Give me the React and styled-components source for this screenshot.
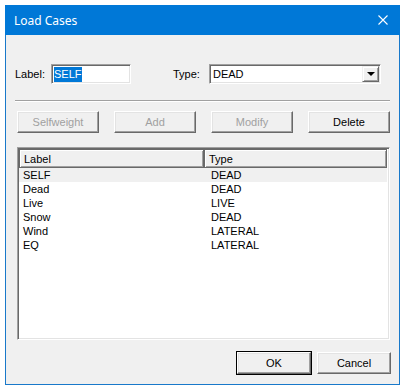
import React from "react";
import styled, { createGlobalStyle } from "styled-components";

const GlobalStyle = createGlobalStyle`
  html, body {
    margin: 0;
    padding: 0;
    background: #fff;
  }
  body {
    font-family: "Liberation Sans", Arial, sans-serif;
  }
`;

const Page = styled.div`
  padding: 5px;
  width: 405px;
  height: 391px;
  box-sizing: border-box;
`;

const Window = styled.div`
  width: 395px;
  height: 380px;
  box-sizing: border-box;
  border: 1px solid #1979ca;
  border-top: none;
  background: #f0f0f0;
  display: flex;
  flex-direction: column;
`;

const TitleBar = styled.div`
  height: 30px;
  margin: 0 -1px;
  background: #0078d7;
  color: #fff;
  display: flex;
  align-items: center;
  justify-content: space-between;
  padding: 0 12px 0 9px;
  font-family: "Noto Sans", "Open Sans", sans-serif;
  font-size: 12px;
`;

const CloseIcon = () => (
  <svg width="10" height="10" viewBox="0 0 10 10">
    <path d="M0.5 0.5 L9.5 9.5 M9.5 0.5 L0.5 9.5" stroke="#fff" strokeWidth="1.1" fill="none" />
  </svg>
);

const Body = styled.div`
  flex: 1;
  display: flex;
  flex-direction: column;
  padding: 29px 8px 10px 9px;
  font-size: 11px;
  color: #000;
`;

const FieldRow = styled.div`
  display: flex;
  align-items: center;
  height: 20px;
`;

const FieldLabel = styled.span`
  width: ${p => p.w}px;
  margin-left: ${p => p.ml || 0}px;
`;

const Sunken = styled.div`
  box-sizing: border-box;
  height: 20px;
  width: ${p => p.w}px;
  background: #fff;
  border-top: 1px solid #a0a0a0;
  border-left: 1px solid #a0a0a0;
  border-right: 1px solid #fff;
  border-bottom: 1px solid #fff;
  box-shadow: inset 1px 1px 0 #696969, inset -1px -1px 0 #e3e3e3;
  display: flex;
  align-items: center;
  padding: 0 2px;
`;

const Selected = styled.span`
  background: #0078d7;
  color: #fff;
  padding: 1px 0;
  line-height: 13px;
`;

const ComboText = styled.span`
  flex: 1;
  padding-left: 1px;
`;

const DropButton = styled.div`
  width: 17px;
  height: 16px;
  box-sizing: border-box;
  background: #f0f0f0;
  border-top: 1px solid #f0f0f0;
  border-left: 1px solid #f0f0f0;
  border-right: 1px solid #696969;
  border-bottom: 1px solid #696969;
  box-shadow: inset 1px 1px 0 #fff, inset -1px -1px 0 #a0a0a0;
  display: flex;
  align-items: center;
  justify-content: center;
  margin-right: -1px;
`;

const Arrow = styled.div`
  width: 0;
  height: 0;
  border-left: 4px solid transparent;
  border-right: 4px solid transparent;
  border-top: 4px solid #000;
`;

const Separator = styled.div`
  margin: 16px 1px 0 0;
  border-top: 1px solid #a0a0a0;
  border-bottom: 1px solid #fff;
`;

const ButtonRow = styled.div`
  display: flex;
  gap: 15px;
  margin: 9px 0 0 2px;
`;

const Button = styled.div`
  box-sizing: border-box;
  width: ${p => p.w || 82}px;
  height: ${p => p.h || 22}px;
  display: flex;
  align-items: center;
  justify-content: center;
  background: #f0f0f0;
  color: ${p => (p.disabled ? "#a0a0a0" : "#000")};
  border-top: 1px solid #fff;
  border-left: 1px solid #fff;
  border-right: 1px solid #696969;
  border-bottom: 1px solid #696969;
  box-shadow: inset -1px -1px 0 #a0a0a0, inset 1px 1px 0 #e3e3e3;
  outline: ${p => (p.primary ? "1px solid #000" : "none")};
`;

const List = styled.div`
  margin: 14px 0 0 2px;
  width: 373px;
  height: 193px;
  box-sizing: border-box;
  background: #fff;
  border-top: 1px solid #a0a0a0;
  border-left: 1px solid #a0a0a0;
  border-right: 1px solid #fff;
  border-bottom: 1px solid #fff;
  box-shadow: inset 1px 1px 0 #696969, inset -1px -1px 0 #e3e3e3;
  padding: 1px 2px 0 1px;
  display: flex;
  flex-direction: column;
`;

const Header = styled.div`
  display: flex;
  height: 19px;
`;

const HeaderCell = styled.div`
  box-sizing: border-box;
  width: ${p => p.w}px;
  height: 19px;
  background: #f0f0f0;
  border: 1px solid #696969;
  box-shadow: inset 1px 1px 0 #fff, inset -1px -1px 0 #a0a0a0;
  display: flex;
  align-items: center;
  padding-left: 4px;
`;

const Row = styled.div`
  display: flex;
  height: 14px;
  align-items: center;
  background: ${p => (p.active ? "#f0f0f0" : "transparent")};
`;

const Cell = styled.div`
  width: ${p => p.w}px;
  padding-left: 4px;
  box-sizing: border-box;
`;

const Footer = styled.div`
  display: flex;
  justify-content: flex-end;
  gap: 6px;
  margin-top: 12px;
`;

const rows = [
  ["SELF", "DEAD"],
  ["Dead", "DEAD"],
  ["Live", "LIVE"],
  ["Snow", "DEAD"],
  ["Wind", "LATERAL"],
  ["EQ", "LATERAL"],
];

export default function App() {
  return (
    <Page>
      <GlobalStyle />
      <Window>
        <TitleBar>
          <span>Load Cases</span>
          <CloseIcon />
        </TitleBar>
        <Body>
          <FieldRow>
            <FieldLabel w={36}>Label:</FieldLabel>
            <Sunken w={80}>
              <Selected>SELF</Selected>
            </Sunken>
            <FieldLabel w={36} ml={42}>Type:</FieldLabel>
            <Sunken w={172}>
              <ComboText>DEAD</ComboText>
              <DropButton>
                <Arrow />
              </DropButton>
            </Sunken>
          </FieldRow>
          <Separator />
          <ButtonRow>
            <Button disabled>Selfweight</Button>
            <Button disabled>Add</Button>
            <Button disabled>Modify</Button>
            <Button>Delete</Button>
          </ButtonRow>
          <List>
            <Header>
              <HeaderCell w={186}>Label</HeaderCell>
              <HeaderCell w={184}>Type</HeaderCell>
            </Header>
            {rows.map(([label, type], i) => (
              <Row key={label} active={i === 0}>
                <Cell w={188}>{label}</Cell>
                <Cell w={180}>{type}</Cell>
              </Row>
            ))}
          </List>
          <Footer>
            <Button w={74} h={22} primary>OK</Button>
            <Button w={74} h={22}>Cancel</Button>
          </Footer>
        </Body>
      </Window>
    </Page>
  );
}
